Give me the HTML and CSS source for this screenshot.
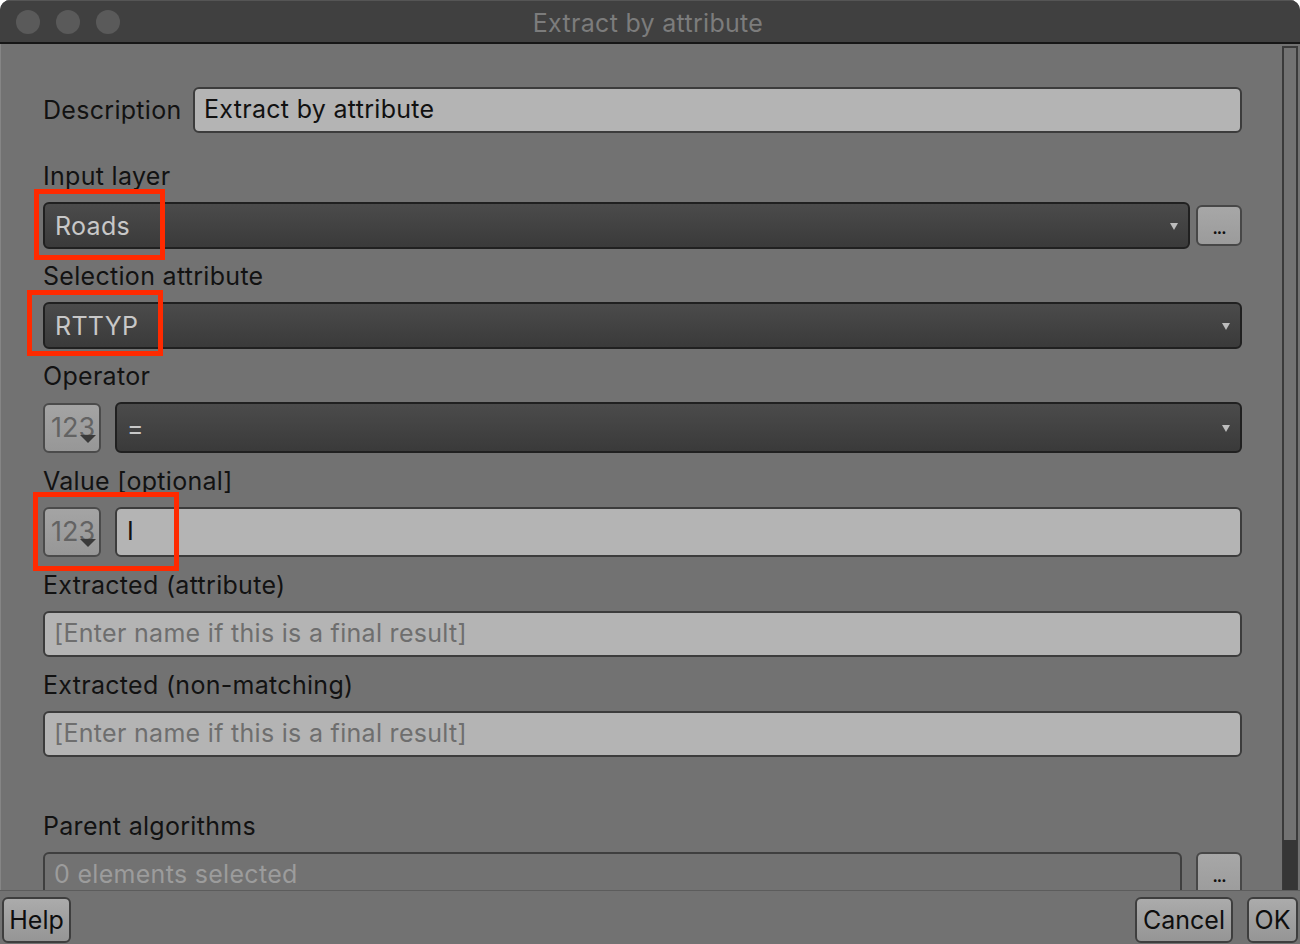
FILE: index.html
```html
<!DOCTYPE html>
<html lang="en">
<head>
<meta charset="utf-8">
<title>Extract by attribute</title>
<link rel="stylesheet" href="styles.css">
</head>
<body>
<div class="window">
  <div class="titlebar">
    <div class="lights">
      <span class="light"></span>
      <span class="light"></span>
      <span class="light"></span>
    </div>
    <div class="title">Extract by attribute</div>
  </div>

  <div class="main">
    <div class="scroll">
      <div class="desc-row">
        <div class="desc-label">Description</div>
        <div class="textbox">Extract by attribute</div>
      </div>

      <div class="field f-first">
        <div class="label">Input layer</div>
        <div class="ctrl-row">
          <div class="combo"><span class="combo-text">Roads</span><span class="combo-arrow"></span></div>
          <div class="dots-btn">...</div>
        </div>
      </div>

      <div class="field">
        <div class="label">Selection attribute</div>
        <div class="combo"><span class="combo-text">RTTYP</span><span class="combo-arrow"></span></div>
      </div>

      <div class="field">
        <div class="label">Operator</div>
        <div class="ctrl-row tall">
          <div class="num-btn"><span class="num-text">123</span><span class="num-tri"></span></div>
          <div class="combo combo-tall"><span class="combo-text">=</span><span class="combo-arrow"></span></div>
        </div>
      </div>

      <div class="field f-14">
        <div class="label">Value [optional]</div>
        <div class="ctrl-row value">
          <div class="num-btn"><span class="num-text">123</span><span class="num-tri"></span></div>
          <div class="textbox tb-value">I</div>
        </div>
      </div>

      <div class="field f-14">
        <div class="label">Extracted (attribute)</div>
        <div class="textbox placeholder">[Enter name if this is a final result]</div>
      </div>

      <div class="field f-14">
        <div class="label">Extracted (non-matching)</div>
        <div class="textbox placeholder">[Enter name if this is a final result]</div>
      </div>

      <div class="field f-parent">
        <div class="label">Parent algorithms</div>
        <div class="ctrl-row parent">
          <div class="parent-box">0 elements selected</div>
          <div class="dots-btn dots-parent">...</div>
        </div>
      </div>

      <div class="mark mark-1"></div>
      <div class="mark mark-2"></div>
      <div class="mark mark-3"></div>
    </div>
    <div class="scrollbar"><div class="thumb"></div></div>
  </div>

  <div class="footer">
    <div class="btn btn-help">Help</div>
    <div class="footer-right">
      <div class="btn btn-cancel">Cancel</div>
      <div class="btn btn-ok">OK</div>
    </div>
  </div>
</div>
</body>
</html>
```

FILE: styles.css
```css
* { box-sizing: border-box; }

html, body {
  margin: 0;
  padding: 0;
  background: #ffffff;
}

body {
  font-family: Inter, "Liberation Sans", Arial, sans-serif;
  font-size: 25px;
  letter-spacing: 0.3px;
  color: #121212;
}

.window {
  width: 1300px;
  height: 944px;
  background: #727272;
  border-radius: 10px 10px 0 0;
  overflow: hidden;
  display: flex;
  flex-direction: column;
}

.titlebar {
  position: relative;
  height: 44px;
  flex: none;
  background: #404040;
  border-top: 1px solid #555555;
  border-bottom: 2px solid #161616;
  display: flex;
  align-items: center;
  justify-content: center;
}

.lights {
  position: absolute;
  left: 16px;
  top: 9px;
  display: flex;
  gap: 16px;
}

.light {
  width: 24px;
  height: 24px;
  border-radius: 50%;
  background: #5a5a5a;
}

.title {
  color: #7c7c7c;
  font-size: 25px;
  line-height: 28px;
  margin-left: -4px;
  margin-top: 2px;
}

.main {
  flex: 1;
  display: flex;
  min-height: 0;
  border-left: 1px solid #858585;
}

.scroll {
  position: relative;
  flex: 1;
  overflow: hidden;
  padding: 43px 40px 0 42px;
}

.scrollbar {
  width: 16px;
  margin: 2px 2px 0 0;
  border: 2px solid #3a3a3a;
  border-bottom: none;
  display: flex;
  flex-direction: column;
  justify-content: flex-end;
}

.thumb {
  height: 50px;
  background: #363636;
  margin: 0 -1px;
}

.footer {
  height: 54px;
  flex: none;
  border-top: 1px solid #5c5c5c;
  display: flex;
  justify-content: space-between;
  align-items: flex-start;
  padding: 6px 2px 0 2px;
}

.footer-right {
  display: flex;
  gap: 14px;
}

.btn {
  height: 46px;
  border: 2px solid #3e3e3e;
  border-radius: 6px;
  background: linear-gradient(#ababab, #959595);
  color: #0e0e0e;
  font-size: 25px;
  letter-spacing: 0;
  line-height: 42px;
  text-align: center;
}

.btn-help { width: 69px; }
.btn-cancel { width: 98px; }
.btn-ok { width: 51px; }

/* form */
.desc-row {
  display: flex;
  align-items: center;
  height: 46px;
}

.desc-label {
  width: 150px;
  line-height: 28px;
}

.textbox {
  flex: 1;
  height: 46px;
  background: #b4b4b4;
  border: 2px solid #3c3c3c;
  border-radius: 6px;
  padding-left: 9px;
  line-height: 41px;
  color: #111111;
}

.placeholder { color: #6e6e6e; }

.field {
  margin-top: 13px;
}

.f-first { margin-top: 29px; }
.f-14 { margin-top: 14px; }
.f-parent { margin-top: 55px; }

.label {
  line-height: 28px;
  margin-bottom: 12px;
}

.ctrl-row {
  display: flex;
  gap: 6px;
  align-items: center;
}

.ctrl-row.tall,
.ctrl-row.value {
  gap: 14px;
}

.combo {
  position: relative;
  flex: 1;
  height: 47px;
  border: 2px solid #202020;
  border-radius: 6px;
  background: linear-gradient(#4b4b4b, #3a3a3a);
  display: flex;
  align-items: center;
  padding-left: 10px;
  color: #c8c8c8;
}

.combo-tall { height: 51px; }

.combo-text {
  line-height: 28px;
}

.combo-arrow {
  position: absolute;
  right: 10px;
  top: 50%;
  margin-top: -3px;
  width: 0;
  height: 0;
  border-left: 4px solid transparent;
  border-right: 4px solid transparent;
  border-top: 7px solid #bdbdbd;
}

.dots-btn {
  width: 46px;
  height: 41px;
  border: 2px solid #474747;
  border-radius: 6px;
  background: linear-gradient(#a7a7a7, #9b9b9b);
  color: #111111;
  font-size: 16px;
  line-height: 42px;
  text-align: center;
  letter-spacing: -1px;
  font-weight: 700;
}

.num-btn {
  position: relative;
  width: 58px;
  height: 50px;
  flex: none;
  border: 2px solid #4b4b4b;
  border-radius: 6px;
  background: linear-gradient(#a4a4a4, #979797);
  overflow: hidden;
}

.num-text {
  position: absolute;
  left: 6px;
  top: 9px;
  line-height: 28px;
  color: #636363;
  font-size: 27px;
  letter-spacing: 0;
}

.num-tri {
  position: absolute;
  left: 35px;
  top: 30px;
  width: 0;
  height: 0;
  border-left: 8px solid transparent;
  border-right: 8px solid transparent;
  border-top: 8px solid #3a3a3a;
}

.tb-value {
  height: 50px;
  line-height: 45px;
  padding-left: 10px;
}

.ctrl-row.parent {
  gap: 14px;
  align-items: flex-start;
}

.parent-box {
  flex: 1;
  height: 46px;
  border: 2px solid #3f3f3f;
  border-radius: 6px;
  padding-left: 9px;
  line-height: 41px;
  color: #9c9c9c;
}

.dots-parent {
  height: 46px;
  line-height: 44px;
}

/* red annotation boxes */
.mark {
  position: absolute;
  border: 5px solid #ff2a00;
}

.mark-1 { left: 33px; top: 145px; width: 131px; height: 71px; }
.mark-2 { left: 26px; top: 246px; width: 136px; height: 66px; }
.mark-3 { left: 32px; top: 448px; width: 146px; height: 79px; }
```
